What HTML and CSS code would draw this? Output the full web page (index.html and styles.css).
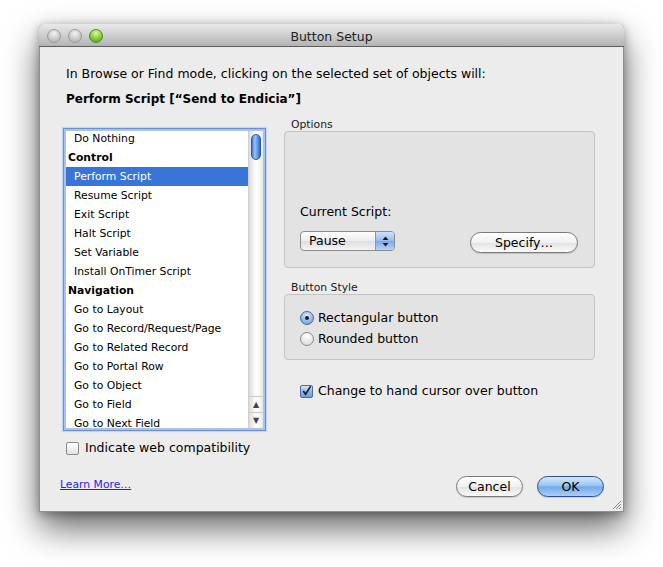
FILE: index.html
```html
<!DOCTYPE html>
<html lang="en">
<head>
    <meta charset="UTF-8">
    <title>Button Setup</title>
    <link rel="stylesheet" href="styles.css">
</head>
<body>
    <div class="window">
        <div class="titlebar">
            <div class="lights">
                <span class="light"></span>
                <span class="light"></span>
                <span class="light green"></span>
            </div>
            <div class="title">Button Setup</div>
        </div>

        <div class="content">
            <p class="intro">In Browse or Find mode, clicking on the selected set of objects will:</p>
            <p class="step">Perform Script [“Send to Endicia”]</p>

            <div class="main">
                <div class="left">
                    <div class="listbox">
                        <ul class="steps">
                            <li>Do Nothing</li>
                            <li class="group">Control</li>
                            <li class="selected">Perform Script</li>
                            <li>Resume Script</li>
                            <li>Exit Script</li>
                            <li>Halt Script</li>
                            <li>Set Variable</li>
                            <li>Install OnTimer Script</li>
                            <li class="group">Navigation</li>
                            <li>Go to Layout</li>
                            <li>Go to Record/Request/Page</li>
                            <li>Go to Related Record</li>
                            <li>Go to Portal Row</li>
                            <li>Go to Object</li>
                            <li>Go to Field</li>
                            <li>Go to Next Field</li>
                        </ul>
                        <div class="scrollbar">
                            <div class="thumb"></div>
                            <div class="arrows">
                                <span class="arrow">&#9650;</span>
                                <span class="arrow">&#9660;</span>
                            </div>
                        </div>
                    </div>
                    <label class="check-row web">
                        <span class="checkbox"></span>
                        Indicate web compatibility
                    </label>
                </div>

                <div class="right">
                    <div class="group-label">Options</div>
                    <div class="group-box options">
                        <div class="field-label">Current Script:</div>
                        <div class="options-row">
                            <div class="popup">
                                <span class="popup-value">Pause</span>
                                <span class="popup-arrows">
                                    <svg width="7" height="11" viewBox="0 0 7 11"><path d="M3.5 0.5 L6.5 4 L0.5 4 Z M0.5 7 L6.5 7 L3.5 10.5 Z" fill="#1b1b1b"/></svg>
                                </span>
                            </div>
                            <button class="push specify">Specify…</button>
                        </div>
                    </div>

                    <div class="group-label style-label">Button Style</div>
                    <div class="group-box style">
                        <label class="radio-row">
                            <span class="radio on"></span>
                            Rectangular button
                        </label>
                        <label class="radio-row">
                            <span class="radio"></span>
                            Rounded button
                        </label>
                    </div>

                    <label class="check-row hand">
                        <span class="checkbox checked">
                            <svg width="12" height="12" viewBox="0 0 12 12"><path d="M2.5 6 L5 9.5 L10.5 1" fill="none" stroke="#1a1a1a" stroke-width="1.8"/></svg>
                        </span>
                        Change to hand cursor over button
                    </label>
                </div>
            </div>
        </div>

        <div class="footer">
            <a class="learn" href="#">Learn More…</a>
            <div class="buttons">
                <button class="push">Cancel</button>
                <button class="push default">OK</button>
            </div>
        </div>

        <svg class="grip" width="11" height="11" viewBox="0 0 11 11">
            <path d="M10 2 L2 10 M10 5 L5 10 M10 8 L8 10" stroke="#8a8a8a" stroke-width="1"/>
        </svg>
    </div>
</body>
</html>
```

FILE: styles.css
```css
* {
    margin: 0;
    padding: 0;
    box-sizing: border-box;
}

html,
body {
    height: 100%;
}

body {
    background: #fff;
    font-family: "DejaVu Sans", sans-serif;
    font-size: 12.5px;
    color: #000;
    padding: 24px 0 0 39px;
}

.window {
    position: relative;
    display: flex;
    flex-direction: column;
    width: 585px;
    height: 488px;
    background: #ececec;
    border: 1px solid #8f8f8f;
    border-top: none;
    border-radius: 5px 5px 0 0;
    box-shadow: 0 16px 34px rgba(0, 0, 0, 0.6), 0 2px 10px rgba(0, 0, 0, 0.3);
}

/* Title bar */
.titlebar {
    position: relative;
    height: 23px;
    margin: 0 -1px;
    padding-top: 2px;
    background: linear-gradient(#e9e9e9, #d2d2d2 45%, #b3b3b3);
    border-bottom: 1px solid #5e5e5e;
    border-radius: 5px 5px 0 0;
    display: flex;
    align-items: center;
    justify-content: center;
}

.lights {
    position: absolute;
    left: 8px;
    top: 5px;
    display: flex;
    gap: 7px;
}

.light {
    width: 14px;
    height: 14px;
    border-radius: 50%;
    background: radial-gradient(circle at 50% 30%, #f4f4f4, #c9c9c9 55%, #a9a9a9);
    border: 1px solid #9b9b9b;
}

.light.green {
    background: radial-gradient(circle at 50% 25%, #d9f7a6, #8bd03a 50%, #4b9a15);
    border-color: #4d8a22;
}

.title {
    font-size: 12.5px;
    color: #222;
}

/* Body */
.content {
    flex: 1;
    padding: 19px 0 0 26px;
}

.intro {
    line-height: 16px;
}

.step {
    margin-top: 9px;
    line-height: 16px;
    font-size: 12px;
    font-weight: bold;
}

.main {
    display: flex;
    gap: 18px;
    margin: 11px 0 0 -3px;
}

/* Script step list */
.listbox {
    position: relative;
    display: flex;
    width: 203px;
    height: 303px;
    margin-top: 10px;
    background: #fff;
    border: 1px solid #6d8fca;
    box-shadow: 0 0 0 2px #a9c4ec inset, 0 0 1px 1px #c3d6f3;
    padding: 0 2px 2px;
    overflow: hidden;
}

.steps {
    flex: 1;
    list-style: none;
    font-size: 10.8px;
    overflow: hidden;
}

.steps li {
    height: 19px;
    line-height: 19px;
    padding-left: 8px;
    white-space: nowrap;
}

.steps li.group {
    padding-left: 2px;
    font-weight: bold;
}

.steps li.selected {
    background: #3875d7;
    color: #fff;
}

.scrollbar {
    position: relative;
    width: 15px;
    margin-top: 2px;
    background: linear-gradient(to right, #dcdcdc, #f8f8f8 40%, #fff 60%, #e6e6e6);
    border-left: 1px solid #cfcfcf;
}

.thumb {
    margin: 3px 2px 0;
    height: 26px;
    border-radius: 6px;
    background: linear-gradient(to right, #3f78cf, #9cc3f3 35%, #6ea5ea 60%, #2f68c3);
    border: 1px solid #2c5ba8;
}

.arrows {
    position: absolute;
    bottom: 0;
    left: 0;
    right: 0;
    display: flex;
    flex-direction: column;
}

.arrow {
    height: 16px;
    line-height: 16px;
    font-size: 8px;
    text-align: center;
    color: #444;
    border-top: 1px solid #c9c9c9;
}

/* Checkboxes & radios */
.check-row,
.radio-row {
    display: flex;
    align-items: center;
    gap: 6px;
    line-height: 16px;
}

.check-row.web {
    margin-top: 9px;
    padding-left: 3px;
    gap: 6px;
}

.checkbox {
    display: flex;
    align-items: center;
    justify-content: center;
    width: 13px;
    height: 13px;
    border: 1px solid #8a8a8a;
    border-radius: 2px;
    background: linear-gradient(#fff, #e3e3e3);
}

.checkbox.checked {
    border-color: #4a6aa0;
    background: linear-gradient(#d6e6fb, #8db6ec 50%, #6c9fe3);
}

.radio {
    width: 14px;
    height: 14px;
    border-radius: 50%;
    border: 1px solid #8a8a8a;
    background: radial-gradient(circle at 50% 25%, #fff, #e6e6e6 60%, #cfcfcf);
    display: flex;
    align-items: center;
    justify-content: center;
}

.radio.on {
    border-color: #4a6aa0;
    background: radial-gradient(circle at 50% 30%, #e0ecfc, #8db6ec 60%, #5d93dc);
}

.radio.on::after {
    content: "";
    width: 4px;
    height: 4px;
    border-radius: 50%;
    background: #1c1c1c;
}

/* Right column groups */
.right {
    width: 311px;
}

.group-label {
    padding-left: 7px;
    font-size: 10.8px;
    line-height: 13px;
    color: #1a1a1a;
}

.style-label {
    margin-top: 13px;
}

.group-box {
    background: #e3e3e3;
    border: 1px solid #c4c4c4;
    border-radius: 4px;
    padding-left: 15px;
}

.group-box.options {
    height: 137px;
    padding-top: 72px;
    padding-right: 16px;
}

.field-label {
    line-height: 16px;
}

.options-row {
    display: flex;
    justify-content: space-between;
    align-items: flex-start;
    margin-top: 11px;
}

.popup {
    display: flex;
    width: 95px;
    height: 20px;
    border: 1px solid #8c8c8c;
    border-radius: 4px;
    background: linear-gradient(#fff, #ececec 50%, #dedede 51%, #f4f4f4);
    overflow: hidden;
}

.popup-value {
    flex: 1;
    padding-left: 8px;
    line-height: 18px;
}

.popup-arrows {
    width: 19px;
    display: flex;
    align-items: center;
    justify-content: center;
    border-left: 1px solid #7b97c6;
    background: linear-gradient(#cfe1fa, #93bdf0 50%, #78aaea 51%, #b6d3f8);
}

.push {
    height: 21px;
    border: 1px solid #7a7a7a;
    border-radius: 11px;
    background: linear-gradient(#fff, #f1f1f1 50%, #e2e2e2 51%, #fafafa);
    font-family: "DejaVu Sans", sans-serif;
    font-size: 12.5px;
    color: #000;
    box-shadow: 0 1px 1px rgba(0, 0, 0, 0.15);
}

.specify {
    width: 108px;
    margin-top: 1px;
}

.group-box.style {
    height: 66px;
    padding-top: 12px;
}

.radio-row {
    height: 21px;
    gap: 4px;
}

.check-row.hand {
    margin-top: 23px;
    padding-left: 16px;
    gap: 5px;
}

/* Footer */
.footer {
    display: flex;
    justify-content: space-between;
    align-items: center;
    padding: 0 19px 14px 20px;
}

.learn {
    margin-bottom: 5px;
    font-size: 10.8px;
    color: #2a1cf0;
}

.buttons {
    display: flex;
    gap: 14px;
}

.buttons .push {
    width: 67px;
}

.push.default {
    border-color: #2f4f8c;
    background: linear-gradient(#d3e6fc, #9cc4f2 45%, #73a8ea 52%, #a8d0fa);
}

.grip {
    position: absolute;
    right: 1px;
    bottom: 1px;
}
```
